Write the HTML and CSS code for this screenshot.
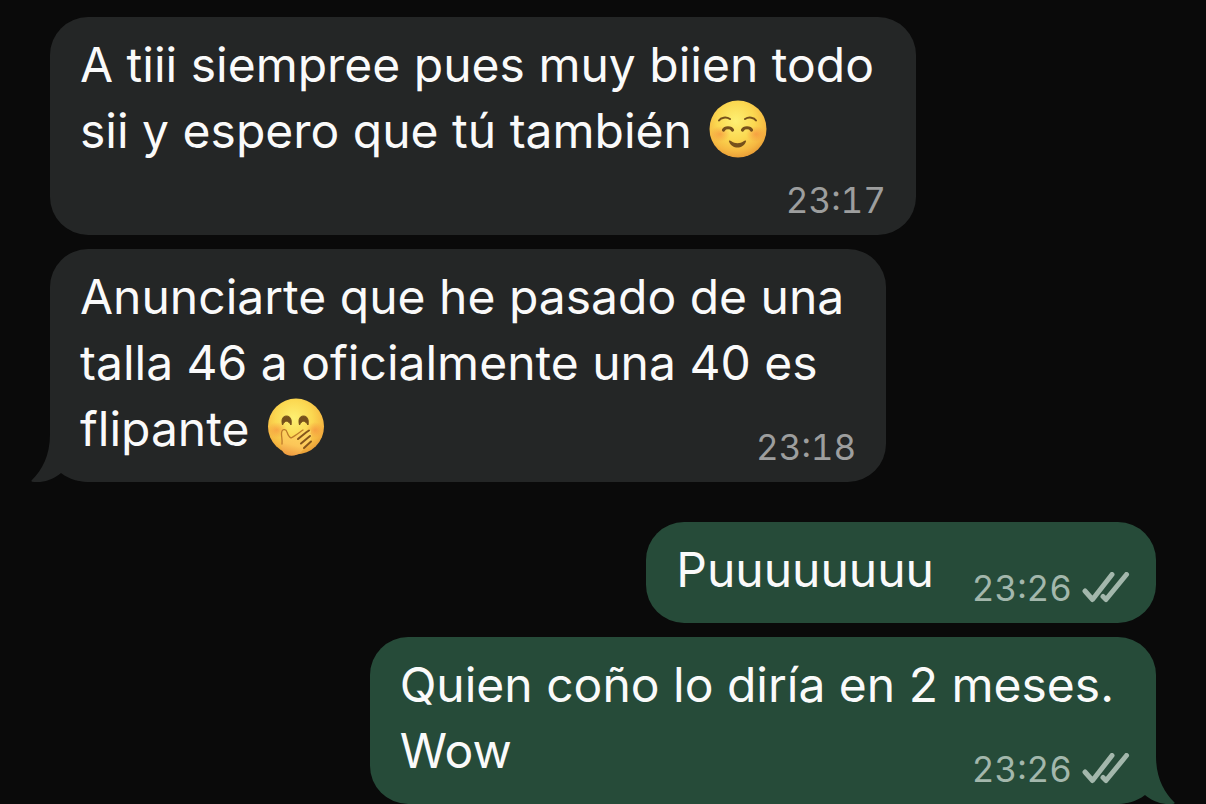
FILE: index.html
```html
<!DOCTYPE html>
<html lang="es">
<head>
    <meta charset="utf-8">
    <title>Chat</title>
    <meta name="viewport" content="width=device-width, initial-scale=1">
    <link rel="stylesheet" href="styles.css">
</head>
<body>
    <main class="chat">

        <article class="bubble received long">
            <p class="text">A tiii siempree pues muy biien todo<br>
                sii y espero que tú también
                <svg class="emoji" viewBox="0 0 58 58" role="img" aria-label="☺️">
                    <defs>
                        <radialGradient id="face" cx="46%" cy="36%" r="66%">
                            <stop offset="0" stop-color="#fdf073"/>
                            <stop offset="0.5" stop-color="#fbd851"/>
                            <stop offset="0.8" stop-color="#f6b942"/>
                            <stop offset="1" stop-color="#e89b36"/>
                        </radialGradient>
                        <radialGradient id="blush">
                            <stop offset="0" stop-color="#f4793a" stop-opacity="0.5"/>
                            <stop offset="1" stop-color="#f4793a" stop-opacity="0"/>
                        </radialGradient>
                    </defs>
                    <circle cx="29" cy="29" r="28.5" fill="url(#face)"/>
                    <ellipse cx="11" cy="34" rx="10" ry="8" fill="url(#blush)"/>
                    <ellipse cx="47" cy="34" rx="10" ry="8" fill="url(#blush)"/>
                    <g fill="none" stroke="#76501b" stroke-linecap="round">
                        <path d="M10 20.500C12 17.500 17 16.500 21 19M36 19C40 16.500 45 17.500 47 20.500" stroke-width="2"/>
                        <path d="M14.500 30C16 27 22 27 23.500 30M33.500 30C35 27 41 27 42.500 30" stroke-width="3.200"/>
                    </g>
                    <path d="M20 41.500C19.500 40.500 21 40 22 41C26 44 31 44 35 41C36 40 37.500 40.500 37 41.500C34 49.500 23 49.500 20 41.500Z" fill="#76501b"/>
                </svg>
            </p>
            <div class="meta"><time>23:17</time></div>
        </article>

        <article class="bubble received">
            <p class="text">Anunciarte que he pasado de una<br>
                talla 46 a oficialmente una 40 es<br>
                flipante
                <svg class="emoji" viewBox="0 0 58 58" role="img" aria-label="🤭">
                    <defs>
                        <linearGradient id="hand" x1="0.6" y1="0" x2="0.3" y2="1">
                            <stop offset="0" stop-color="#fdd862"/>
                            <stop offset="0.6" stop-color="#fcc658"/>
                            <stop offset="1" stop-color="#ee9a40"/>
                        </linearGradient>
                    </defs>
                    <circle cx="29" cy="28.500" r="28" fill="url(#face)"/>
                    <ellipse cx="10" cy="32" rx="10" ry="8" fill="url(#blush)"/>
                    <ellipse cx="48" cy="32" rx="9" ry="8" fill="url(#blush)"/>
                    <path d="M15.500 27C14 21 16 18 19.500 18S25 21 24 27C21 22 18 22 15.500 27ZM32.500 27C31 21 33 18 36.500 18S42 21 41 27C38 22 35 22 32.500 27Z" fill="#76501b" stroke="#76501b" stroke-linejoin="round"/>
                    <path d="M14.500 36C14 30 19 30 20 34C21 37 22 39 24 40C28 38 33 34 36 32C38 30.500 40 33 38 35L41 32.500C43 31 45 33 43 35.500C45 36 45 38 43.500 40C45 41 44 43 42 45L34 54C29 59 20 59 16 54C13 49 15 43 14.500 36Z" fill="url(#hand)"/>
                    <path d="M15 46C15.500 42 14.500 39 14.500 36C14.500 30.500 19 30.500 20 34C21 37 22 39 24 40C28 38 33 34 36 32" fill="none" stroke="#bd7b2a" stroke-width="1.300" stroke-linecap="round"/>
                    <path d="M31 41L39 34.500L42 32.500M34 45.500L43 38M37 50L44 43.500" fill="none" stroke="#85551c" stroke-width="2" stroke-linecap="round"/>
                </svg>
            </p>
            <div class="meta"><time>23:18</time></div>
            <svg class="tail" viewBox="0 0 70 60" aria-hidden="true">
                <path d="M20 0V12C20 34 12 48 2 58Q0 60 4 60C14 61 24 57 31 51C40 58 50 60 62 60H70V0Z"/>
            </svg>
        </article>

        <article class="bubble sent first short">
            <p class="text">Puuuuuuuu</p>
            <div class="meta">
                <time>23:26</time>
                <svg class="ticks" viewBox="0 0 48 32" role="img" aria-label="Entregado">
                    <path d="M3 19L10.500 27.500L30 2.500M21 24.500L24 27.500L44.500 2.500"/>
                </svg>
            </div>
        </article>

        <article class="bubble sent">
            <p class="text">Quien coño lo diría en 2 meses.<br>
                Wow</p>
            <div class="meta">
                <time>23:26</time>
                <svg class="ticks" viewBox="0 0 48 32" role="img" aria-label="Entregado">
                    <path d="M3 19L10.500 27.500L30 2.500M21 24.500L24 27.500L44.500 2.500"/>
                </svg>
            </div>
            <svg class="tail" viewBox="0 0 70 60" aria-hidden="true">
                <path d="M20 0V12C20 34 12 48 2 58Q0 60 4 60C14 61 24 57 31 51C40 58 50 60 62 60H70V0Z"/>
            </svg>
        </article>

    </main>
</body>
</html>
```

FILE: styles.css
```css
body {
    margin: 0;
    background: #0a0a0a;
    color: #fafafa;
    font-family: Inter, 'Liberation Sans', sans-serif;
}

.chat {
    display: flex;
    flex-direction: column;
    gap: 14px;
    padding: 17px 50px 0;
}

.bubble {
    position: relative;
    isolation: isolate;
    display: flex;
    flex-direction: column;
    padding: 15px 30px 13px;
    border-radius: 38px;
}

.received {
    align-self: flex-start;
    background: #242626;
    fill: #242626;
}

.sent {
    align-self: flex-end;
    background: #264b39;
    fill: #264b39;
}

.first {
    margin-top: 26px;
}

.text {
    margin: 0;
    padding-right: 12px;
    font-size: 48px;
    line-height: 66px;
}

.short .text {
    padding-right: 192px;
}

.emoji {
    width: 58px;
    height: 58px;
    margin: -10px 0 -10px 4px;
}

.meta {
    display: flex;
    align-items: center;
    align-self: flex-end;
    gap: 10px;
    margin-top: -37px;
    color: #9d9e9e;
    font-size: 35px;
    font-variant-numeric: tabular-nums;
    line-height: 44px;
}

.long .meta {
    margin-top: 14px;
}

.sent .meta {
    color: #a3b7ac;
    margin-right: -4px;
}

.ticks {
    width: 48px;
    height: 32px;
    fill: none;
    stroke: currentColor;
    stroke-width: 5;
    stroke-linecap: round;
    stroke-linejoin: round;
}

/* behind the text, which may run over the corner */
.tail {
    position: absolute;
    z-index: -1;
    left: -20px;
    bottom: 0;
    width: 70px;
    height: 60px;
}

.sent .tail {
    left: auto;
    right: -20px;
    transform: scaleX(-1);
}
```
